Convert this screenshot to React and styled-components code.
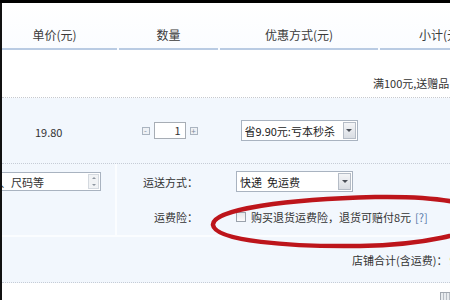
import React from "react";
import styled, { createGlobalStyle } from "styled-components";

const GlobalStyle = createGlobalStyle`
  html, body {
    margin: 0;
    padding: 0;
    background: #fff;
  }
  body {
    font-family: "Noto Sans CJK SC", "Noto Sans", sans-serif;
    font-size: 11px;
    color: #333;
  }
`;

const COLS = "115px 99px 158px 150px 1fr";

const Page = styled.div`
  position: relative;
  width: 450px;
  height: 300px;
  overflow: hidden;
  box-sizing: border-box;
  border-top: 3px solid #000;
  background: #fff;
`;

const Board = styled.div`
  width: 640px;
  border-left: 2px solid #111;
`;

const Head = styled.div`
  display: grid;
  grid-template-columns: ${COLS};
  column-gap: 2px;
  height: 47px;
  background: linear-gradient(#fff, #fafcff);
`;

const HeadCell = styled.div`
  box-sizing: border-box;
  display: flex;
  align-items: flex-end;
  justify-content: center;
  padding-bottom: 5px;
  padding-right: ${({ shift }) => shift || 0}px;
  border-bottom: 2px solid #b9cbe3;
  font-size: 12px;
  color: #3a3a3a;
`;

const PromoRow = styled.div`
  box-sizing: border-box;
  height: 48px;
  display: flex;
  align-items: flex-end;
  padding: 0 0 6px 371px;
  border-bottom: 1px dotted #c6c9cf;
  white-space: nowrap;
  color: #333;
`;

const ItemRow = styled.div`
  box-sizing: border-box;
  display: grid;
  grid-template-columns: ${COLS};
  column-gap: 2px;
  align-items: center;
  height: 66px;
  background: #f2f7fd;
  border-bottom: 1px dotted #c6ccd6;
`;

const Price = styled.div`
  padding-left: 33px;
  padding-top: 2px;
  color: #333;
`;

const Qty = styled.div`
  display: flex;
  align-items: center;
  justify-content: center;
  gap: 4px;
  padding-left: 2px;
`;

const StepBtn = styled.span`
  box-sizing: border-box;
  width: 8px;
  height: 8px;
  border: 1px solid #aab4c0;
  background: #eef1f5;
  display: flex;
  align-items: center;
  justify-content: center;
  font-size: 8px;
  line-height: 1;
  color: #7c8a9a;
`;

const QtyInput = styled.div`
  box-sizing: border-box;
  width: 32px;
  height: 17px;
  border: 1px solid #a7adb5;
  background: #fff;
  text-align: right;
  padding-right: 4px;
  font-size: 11px;
  line-height: 15px;
`;

const SelectBox = styled.div`
  box-sizing: border-box;
  width: 117px;
  height: 21px;
  border: 1px solid #a9b3c0;
  background: #fff;
  display: flex;
  align-items: center;
  padding: 1px 1px 1px 3px;
  font-size: 11px;
  color: #222;
  white-space: nowrap;
`;

const SelectText = styled.span`
  flex: 1;
  overflow: hidden;
`;

const SelectArrow = styled.span`
  box-sizing: border-box;
  width: 13px;
  height: 17px;
  border: 1px solid #b5bcc6;
  background: linear-gradient(#f4f5f7, #d9dde3);
  display: flex;
  align-items: center;
  justify-content: center;

  &::after {
    content: "";
    border-left: 3px solid transparent;
    border-right: 3px solid transparent;
    border-top: 3px solid #4a4f57;
  }
`;

const CenterCell = styled.div`
  display: flex;
  justify-content: center;
`;

const Options = styled.div`
  box-sizing: border-box;
  display: grid;
  grid-template-columns: 115px 1fr;
  height: 73px;
  background: #f2f7fd;
  border-bottom: 2px solid #fbfdff;
`;

const NoteCol = styled.div`
  border-right: 2px solid #fbfdff;
  padding-top: 8px;
  overflow: hidden;
`;

const NoteBox = styled.div`
  box-sizing: border-box;
  display: flex;
  align-items: center;
  width: 148px;
  height: 19px;
  margin-left: -49px;
  border: 1px solid #a9b3c0;
  background: #fff;
  padding-left: 2px;
  white-space: nowrap;
`;

const NoteText = styled.span`
  flex: 1;
  overflow: hidden;
`;

const Spin = styled.span`
  box-sizing: border-box;
  width: 11px;
  height: 15px;
  margin-right: 1px;
  border: 1px solid #d4d9df;
  background: #f1f3f5;
  display: flex;
  flex-direction: column;
  align-items: center;
  justify-content: space-around;

  &::before {
    content: "";
    border-left: 2px solid transparent;
    border-right: 2px solid transparent;
    border-bottom: 2px solid #8e96a0;
  }
  &::after {
    content: "";
    border-left: 2px solid transparent;
    border-right: 2px solid transparent;
    border-top: 2px solid #8e96a0;
  }
`;

const OptionList = styled.div`
  display: flex;
  flex-direction: column;
`;

const OptionRow = styled.div`
  display: grid;
  grid-template-columns: 101px 1fr;
  align-items: center;
  height: ${({ h }) => h}px;
`;

const Label = styled.div`
  text-align: right;
  padding-right: 20px;
  color: #333;
`;

const Value = styled.div`
  display: flex;
  align-items: center;
  gap: 5px;
  padding-left: 18px;
  white-space: nowrap;
`;

const Check = styled.span`
  box-sizing: border-box;
  width: 10px;
  height: 10px;
  border: 1px solid #9aa2ac;
  background: linear-gradient(#e6e8eb, #fbfbfc);
`;

const Help = styled.span`
  color: #5677a8;
  margin-left: 4px;
`;

const TotalRow = styled.div`
  box-sizing: border-box;
  height: 46px;
  display: flex;
  align-items: center;
  padding: 0 0 0 350px;
  background: #f2f7fd;
  border-bottom: 1px dotted #c6ccd6;
  white-space: nowrap;
`;

const Amount = styled.span`
  color: #ff6a00;
  font-weight: bold;
  font-size: 14px;
  margin-left: 2px;
`;

const Footer = styled.div`
  height: 20px;
  display: flex;
  align-items: center;
  padding-left: 438px;
`;

const MiniIcon = styled.span`
  box-sizing: border-box;
  width: 13px;
  height: 9px;
  margin-top: 6px;
  border: 1px solid #a2a8b0;
  background: repeating-linear-gradient(90deg, #e9ecef 0 2px, #b9bec5 2px 3px);
`;

const Mark = styled.svg`
  position: absolute;
  left: 0;
  top: 0;
  pointer-events: none;
`;

const Select = ({ children }) => (
  <SelectBox>
    <SelectText>{children}</SelectText>
    <SelectArrow />
  </SelectBox>
);

export default function App() {
  return (
    <>
      <GlobalStyle />
      <Page>
        <Board>
          <Head>
            <HeadCell shift={10}>单价(元)</HeadCell>
            <HeadCell>数量</HeadCell>
            <HeadCell>优惠方式(元)</HeadCell>
            <HeadCell shift={28}>小计(元)</HeadCell>
            <HeadCell />
          </Head>

          <PromoRow>满100元,送赠品 (查看赠品)</PromoRow>

          <ItemRow>
            <Price>19.80</Price>
            <Qty>
              <StepBtn>-</StepBtn>
              <QtyInput>1</QtyInput>
              <StepBtn>+</StepBtn>
            </Qty>
            <CenterCell>
              <Select>省9.90元:亏本秒杀</Select>
            </CenterCell>
            <div />
          </ItemRow>

          <Options>
            <NoteCol>
              <NoteBox>
                <NoteText>填写颜色、尺码等</NoteText>
                <Spin />
              </NoteBox>
            </NoteCol>
            <OptionList>
              <OptionRow h={35}>
                <Label>运送方式：</Label>
                <Value>
                  <Select>快递&nbsp;&nbsp;免运费</Select>
                </Value>
              </OptionRow>
              <OptionRow h={36}>
                <Label>运费险：</Label>
                <Value>
                  <Check />
                  <span>
                    购买退货运费险，退货可赔付8元<Help>[?]</Help>
                  </span>
                </Value>
              </OptionRow>
            </OptionList>
          </Options>

          <TotalRow>
            店铺合计(含运费)：<Amount>9.90</Amount>
          </TotalRow>

          <Footer>
            <MiniIcon />
          </Footer>
        </Board>

        <Mark width="450" height="300" viewBox="0 0 450 300">
          <path
            d="M213 222 C211 206, 290 196, 375 194 C440 193, 482 200, 480 216 C478 231, 420 242, 360 243 C290 244, 215 238, 213 222 Z"
            fill="none"
            stroke="#bd151b"
            strokeWidth="4.5"
          />
        </Mark>
      </Page>
    </>
  );
}
